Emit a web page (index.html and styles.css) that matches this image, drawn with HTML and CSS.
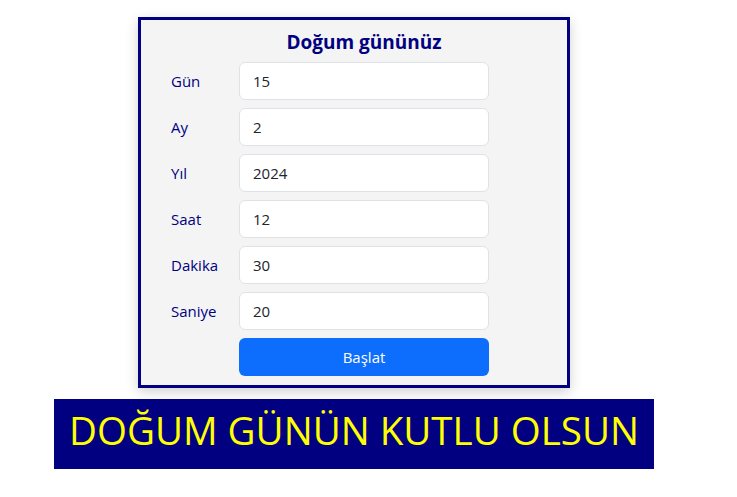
FILE: index.html
```html
<!DOCTYPE html>
<html lang="tr">
<head>
<meta charset="utf-8">
<title>Doğum gününüz</title>
<link rel="stylesheet" href="styles.css">
</head>
<body>
<div class="page">
  <form class="card">
    <div class="spacer"></div>
    <h5 class="title">Doğum gününüz</h5>
    <label class="label">Gün</label><input class="field" type="text" value="15">
    <label class="label">Ay</label><input class="field" type="text" value="2">
    <label class="label">Yıl</label><input class="field" type="text" value="2024">
    <label class="label">Saat</label><input class="field" type="text" value="12">
    <label class="label">Dakika</label><input class="field" type="text" value="30">
    <label class="label">Saniye</label><input class="field" type="text" value="20">
    <div class="spacer"></div>
    <button class="btn" type="button">Başlat</button>
  </form>
  <div class="banner">DOĞUM GÜNÜN KUTLU OLSUN</div>
</div>
</body>
</html>
```

FILE: styles.css
```css
html, body {
  margin: 0;
  padding: 0;
  background: #ffffff;
}
body {
  font-family: "Open Sans", "Noto Sans", sans-serif;
  color: #212529;
}
.page {
  width: 708px;
  padding-top: 17px;
  display: flex;
  flex-direction: column;
  align-items: center;
  gap: 11px;
}
.card {
  box-sizing: border-box;
  width: 432px;
  height: 371px;
  margin: 0;
  border: 3px solid #000080;
  background: #f4f4f4;
  box-shadow: 0 4px 12px rgba(0, 0, 0, 0.18);
  padding: 0 0 0 30px;
  display: grid;
  grid-template-columns: 68px 250px;
  grid-template-rows: 34px;
  grid-auto-rows: 38px;
  row-gap: 8px;
  align-items: center;
  align-content: start;
}
.title {
  margin: 0 0 2px 0;
  align-self: end;
  text-align: center;
  font-size: 19px;
  font-weight: 700;
  line-height: 19px;
  color: #000080;
}
.label {
  font-size: 15px;
  color: #000080;
  line-height: 38px;
}
.field {
  box-sizing: border-box;
  width: 250px;
  height: 38px;
  margin: 0;
  border: 1px solid #dee2e6;
  border-radius: 6px;
  background: #fff;
  padding: 0 13px;
  font-family: inherit;
  font-size: 15px;
  color: #212529;
  outline: none;
}
.btn {
  box-sizing: border-box;
  width: 250px;
  height: 38px;
  margin: 0;
  border: none;
  border-radius: 6px;
  background: #0d6efd;
  color: #fff;
  font-family: inherit;
  font-size: 15px;
}
.banner {
  box-sizing: border-box;
  width: 600px;
  height: 70px;
  background: #000080;
  color: #ffff00;
  font-size: 38.5px;
  line-height: 62px;
  padding-bottom: 8px;
  text-align: center;
}
```
